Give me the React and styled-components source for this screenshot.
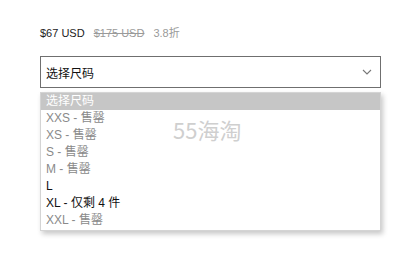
import React from "react";
import styled, { createGlobalStyle } from "styled-components";

const Global = createGlobalStyle`
  body {
    margin: 0;
    background: #fff;
    font-family: "Liberation Sans", Arial, "Noto Sans CJK SC", sans-serif;
  }
`;

const Page = styled.div`
  position: relative;
  width: 420px;
  height: 258px;
  padding: 26px 39px 0 40px;
  box-sizing: border-box;
`;

const PriceRow = styled.div`
  display: flex;
  align-items: baseline;
  gap: 9px;
  font-size: 11px;
  line-height: 14px;
  height: 14px;
`;

const Price = styled.span`
  color: ${(p) => (p.$muted ? "#9a9a9a" : "#222")};
  text-decoration: ${(p) => (p.$struck ? "line-through" : "none")};
`;

const Select = styled.div`
  margin-top: 16px;
  height: 32px;
  border: 1px solid #6f6f6f;
  box-sizing: border-box;
  display: flex;
  align-items: center;
  justify-content: space-between;
  padding: 0 8px 0 5px;
  font-size: 12px;
  color: #111;
`;

const List = styled.ul`
  list-style: none;
  margin: 4px 0 0;
  padding: 0 0 1px;
  border: 1px solid #d4d4d4;
  box-shadow: 2px 3px 5px rgba(0, 0, 0, 0.22);
  background: #fff;
`;

const Option = styled.li`
  height: 17px;
  line-height: 17px;
  padding: 0 5px;
  font-size: 12px;
  color: ${(p) => (p.$header ? "#fff" : p.$disabled ? "#8a8a8a" : "#111")};
  background: ${(p) => (p.$header ? "#c6c6c6" : "transparent")};
`;

const Watermark = styled.div`
  position: absolute;
  left: 173px;
  top: 118px;
  font-size: 22px;
  line-height: 22px;
  color: #cfcfcf;
  font-family: "Noto Sans CJK SC", "Liberation Sans", sans-serif;
  pointer-events: none;
`;

const options = [
  { label: "XXS - 售罄", disabled: true },
  { label: "XS - 售罄", disabled: true },
  { label: "S - 售罄", disabled: true },
  { label: "M - 售罄", disabled: true },
  { label: "L" },
  { label: "XL - 仅剩 4 件" },
  { label: "XXL - 售罄", disabled: true },
];

const Chevron = () => (
  <svg width="10" height="6" viewBox="0 0 10 6">
    <path d="M1 1l4 4 4-4" fill="none" stroke="#777" strokeWidth="1.1" />
  </svg>
);

export default function App() {
  return (
    <Page>
      <Global />
      <PriceRow>
        <Price>$67 USD</Price>
        <Price $muted $struck>$175 USD</Price>
        <Price $muted>3.8折</Price>
      </PriceRow>
      <Select>
        <span>选择尺码</span>
        <Chevron />
      </Select>
      <List>
        <Option $header>选择尺码</Option>
        {options.map((o) => (
          <Option key={o.label} $disabled={o.disabled}>
            {o.label}
          </Option>
        ))}
      </List>
      <Watermark>55海淘</Watermark>
    </Page>
  );
}
